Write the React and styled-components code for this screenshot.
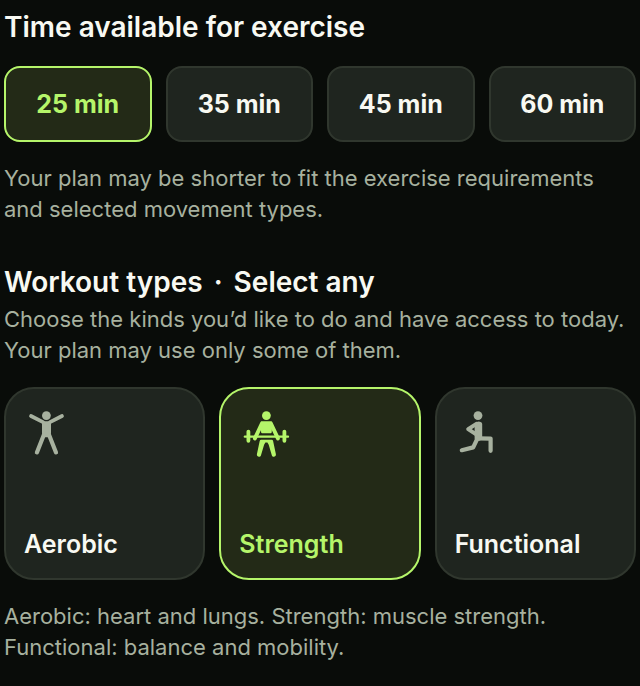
import React, { useState } from 'react';
import styled, { createGlobalStyle } from 'styled-components';

const GlobalStyle = createGlobalStyle`
  * {
    box-sizing: border-box;
  }

  body {
    margin: 0;
    background: #090c09;
    color: #f8f9f2;
    font-family: Inter, 'Liberation Sans', sans-serif;
  }
`;

const Page = styled.main`
  display: flex;
  flex-direction: column;
  gap: 39px;
  padding: 9px 4px 24px;
`;

const Section = styled.section`
  display: flex;
  flex-direction: column;
`;

const Title = styled.h2`
  margin: 0;
  font-size: 28px;
  line-height: 36px;
  font-weight: 600;
`;

const Dot = styled.span`
  margin: 0 4px;
`;

const Note = styled.p`
  margin: 0;
  color: #a7b19f;
  font-size: 22px;
  line-height: 31px;

  ${Title} + & {
    margin-top: 4px;
  }
`;

const OptionGrid = styled.div`
  display: grid;
  grid-template-columns: repeat(${({ $columns }) => $columns}, 1fr);
  gap: 14px;
  margin: 21px 0;
`;

const OptionButton = styled.button`
  margin: 0;
  border: 2px solid ${({ $selected }) => ($selected ? '#b5f56a' : '#30372e')};
  background: ${({ $selected }) => ($selected ? '#232a17' : '#1f251f')};
  color: ${({ $selected }) => ($selected ? '#b5f56a' : '#f8f9f2')};
  font-family: inherit;
  font-size: 25px;
  line-height: 32px;
  font-weight: 600;
  cursor: pointer;
`;

const TimeButton = styled(OptionButton)`
  padding: 20px 0;
  border-radius: 16px;
  font-weight: 700;
  text-align: center;
`;

const TypeButton = styled(OptionButton)`
  display: flex;
  flex-direction: column;
  justify-content: space-between;
  align-items: flex-start;
  min-height: 193px;
  padding: 18px;
  border-radius: 30px;
`;

const TypeIcon = styled.svg`
  width: 52px;
  height: 52px;
  color: ${({ $selected }) => ($selected ? '#b5f56a' : '#a7b19f')};
`;

const AerobicShape = () => (
  <g fill="currentColor" stroke="currentColor" strokeLinecap="round" strokeLinejoin="round">
    <circle cx="22.4" cy="8.6" r="4.4" stroke="none" />
    <path d="M7 9 19 15.2M38 9 26 15.2" fill="none" strokeWidth="3.7" />
    <path d="M19.2 15.4h6.6V26l-1.4 3h-3.8l-1.4-3z" strokeWidth="2.4" />
    <path d="M20.2 27 12.9 45.4M24.7 27l7.3 18.4" fill="none" strokeWidth="4.2" />
  </g>
);

const StrengthShape = () => (
  <g fill="currentColor" stroke="currentColor" strokeLinecap="round" strokeLinejoin="round">
    <circle cx="27.4" cy="8.6" r="4.4" stroke="none" />
    <path d="M24 15.4h6.8q1 0 1.4 1.6l-.6 8.2h-8.4L22.6 17q.4-1.6 1.4-1.6z" strokeWidth="2.2" />
    <path d="M23 16.4 15.9 31.4M31.8 16.4l7.1 15" fill="none" strokeWidth="3.9" />
    <path d="M5.8 29.7h43.2" fill="none" strokeWidth="2.3" />
    <path d="M9.4 24.6v9.2M45.4 24.6v9.2" fill="none" strokeWidth="3.8" />
    <path
      d="M22.2 32.8h10.4c.8 0 1.3.4 1.5 1.2l2.8 13.3c.5 2.6-3.4 3.4-4.1.9l-3.1-10.4-1.3-2.2h-2l-1.3 2.2L22 48.2c-.7 2.5-4.6 1.7-4.1-.9L20.7 34c.2-.8.7-1.2 1.5-1.2z"
      stroke="none"
    />
  </g>
);

const FunctionalShape = () => (
  <g fill="currentColor" stroke="currentColor" strokeLinecap="round" strokeLinejoin="round">
    <circle cx="23" cy="8.6" r="4.4" stroke="none" />
    <path d="M21.8 17.8Q23 16.4 25 17v12.6l-1 2h-2.2z" strokeWidth="4.4" />
    <path d="M21.4 16.8 13.2 22.2l7.6 5" fill="none" strokeWidth="4" />
    <path d="M23.4 31.4 35.6 31.6v12.2" fill="none" strokeWidth="4.2" />
    <path d="M22.6 31.2 18.2 40.4 6.8 43.2" fill="none" strokeWidth="4.2" />
  </g>
);

const times = [25, 35, 45, 60];

const workoutTypes = [
  { name: 'Aerobic', Shape: AerobicShape },
  { name: 'Strength', Shape: StrengthShape },
  { name: 'Functional', Shape: FunctionalShape },
];

const App = () => {
  const [time, setTime] = useState(25);
  const [selectedTypes, setSelectedTypes] = useState(['Strength']);

  const toggleType = (name) => {
    setSelectedTypes((current) =>
      current.includes(name) ? current.filter((type) => type !== name) : [...current, name]
    );
  };

  return (
    <>
      <GlobalStyle />
      <Page>
        <Section aria-labelledby="time-title">
          <Title id="time-title">Time available for exercise</Title>
          <OptionGrid $columns={4}>
            {times.map((minutes) => (
              <TimeButton
                key={minutes}
                type="button"
                $selected={time === minutes}
                aria-pressed={time === minutes}
                onClick={() => setTime(minutes)}
              >
                {minutes} min
              </TimeButton>
            ))}
          </OptionGrid>
          <Note>Your plan may be shorter to fit the exercise requirements and selected movement types.</Note>
        </Section>

        <Section aria-labelledby="types-title">
          <Title id="types-title">
            Workout types <Dot>·</Dot> Select any
          </Title>
          <Note>
            Choose the kinds you’d like to do and have access to today. Your plan may use only some of them.
          </Note>
          <OptionGrid $columns={3}>
            {workoutTypes.map(({ name, Shape }) => {
              const selected = selectedTypes.includes(name);
              return (
                <TypeButton
                  key={name}
                  type="button"
                  $selected={selected}
                  aria-pressed={selected}
                  onClick={() => toggleType(name)}
                >
                  <TypeIcon $selected={selected} viewBox="0 0 52 52" aria-hidden="true">
                    <Shape />
                  </TypeIcon>
                  {name}
                </TypeButton>
              );
            })}
          </OptionGrid>
          <Note>Aerobic: heart and lungs. Strength: muscle strength. Functional: balance and mobility.</Note>
        </Section>
      </Page>
    </>
  );
};

export default App;
